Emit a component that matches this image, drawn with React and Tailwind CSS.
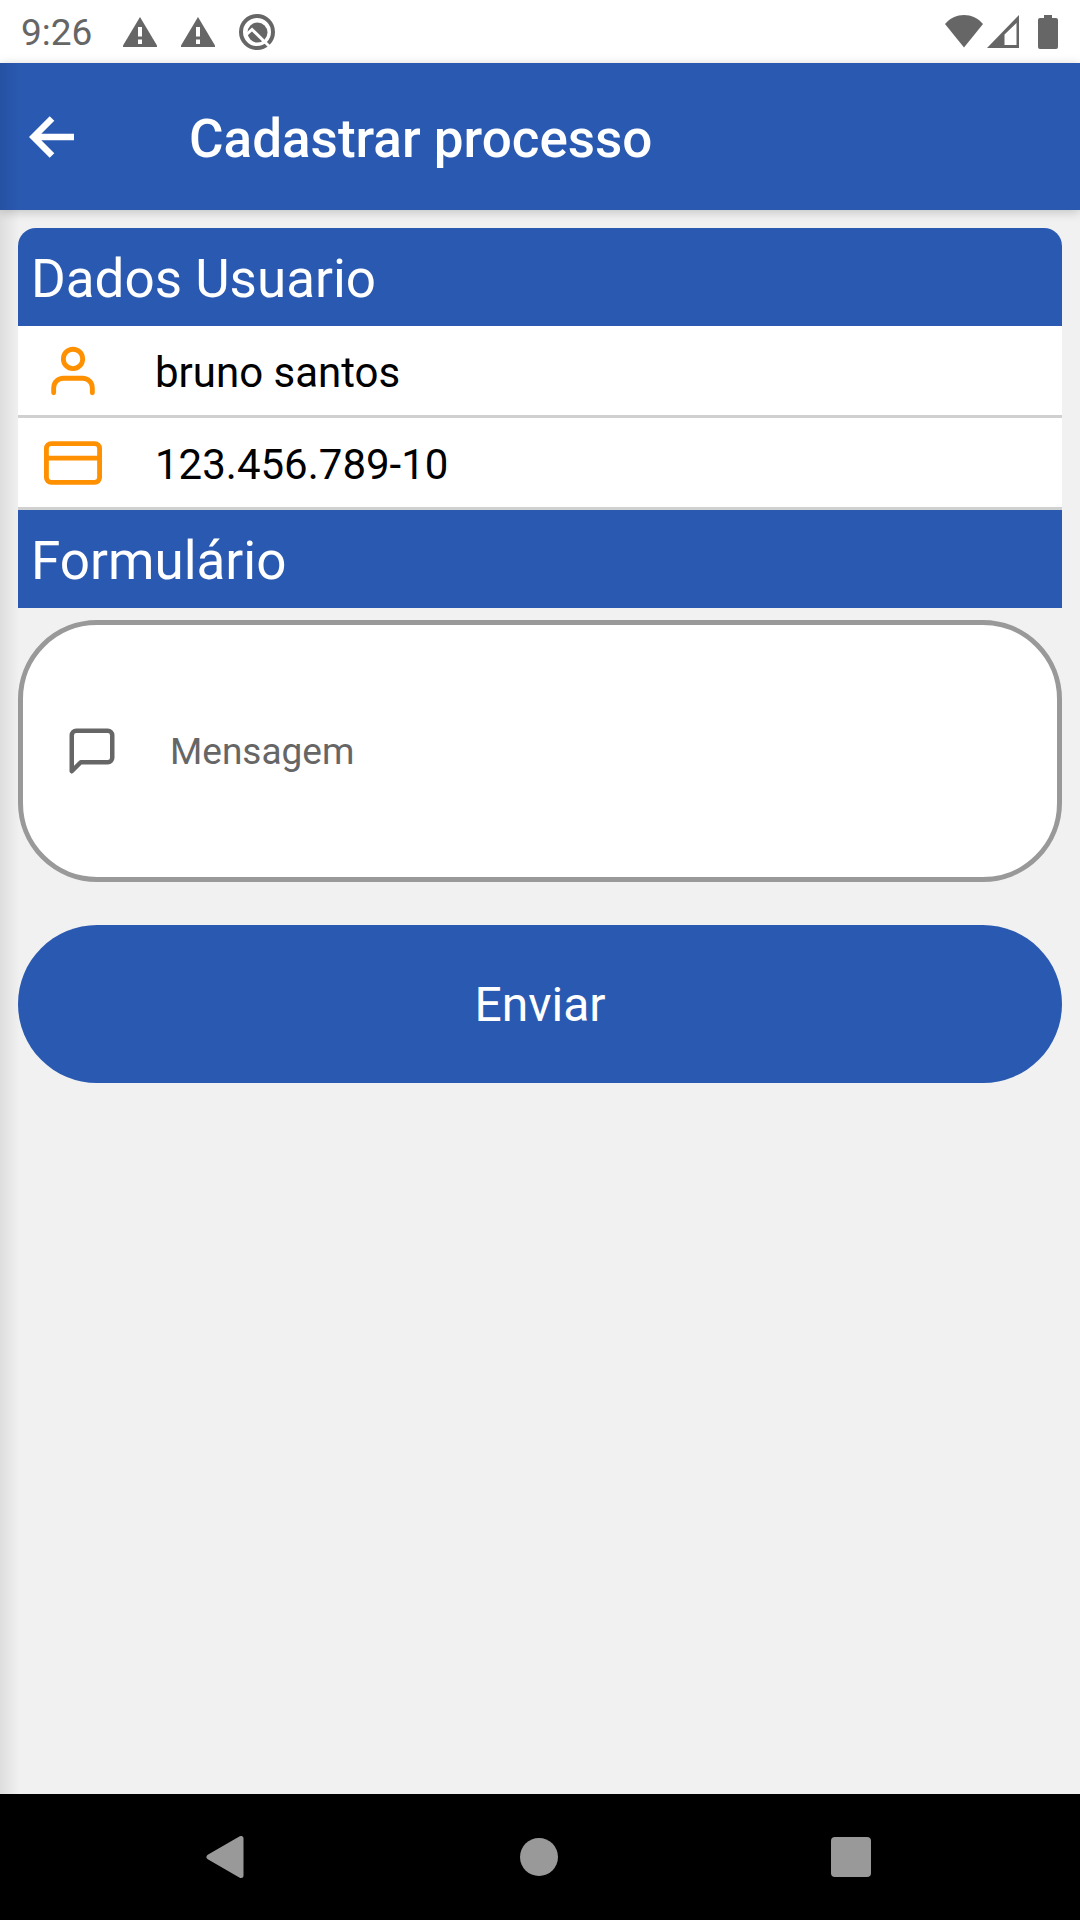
import { FiUser, FiCreditCard, FiMessageSquare } from "react-icons/fi";

function WarningIcon() {
  return (
    <svg className="h-[30px] w-[34px]" viewBox="0 0 34 30" aria-hidden="true">
      <path d="M17 0 34 28.500V30H0V28.500Z" fill="#666" />
      <path d="M15 10h4v9.500h-4zM15 22.500h4v4.500h-4z" fill="#fff" />
    </svg>
  );
}

function DebugIcon() {
  return (
    <svg className="size-9" viewBox="0 0 36 36" aria-hidden="true">
      <circle cx="18" cy="18" r="16" fill="none" stroke="#666" strokeWidth="4" />
      <circle cx="18.500" cy="18.500" r="10" fill="#666" />
      <path d="M7.500 20.500 13 15.500 31 33" fill="none" stroke="#fff" strokeWidth="3" />
    </svg>
  );
}

function StatusBar() {
  return (
    <header className="flex h-[63px] items-center justify-between bg-white pl-[21px] pr-[22px]">
      <div className="flex items-center">
        <span className="w-[102px] pt-0.5 text-[37px] leading-[44px] text-[#666]">9:26</span>
        <div className="flex items-center gap-6">
          <WarningIcon />
          <WarningIcon />
          <DebugIcon />
        </div>
      </div>
      <div className="flex items-center">
        <svg className="h-[33px] w-[38px]" viewBox="0 0 38 33" aria-label="Wi-Fi">
          <path d="M0 9C5 3 12 0 19 0s14 3 19 9L19 32.500Z" fill="#666" />
        </svg>
        <svg className="ml-1 h-[33px] w-8" viewBox="0 0 32 33" aria-label="Sinal">
          <path d="M32 0V33H0ZM29.500 8 17.500 19.500V30h12Z" fill="#666" fillRule="evenodd" />
        </svg>
        <svg className="ml-[19px] h-[34px] w-5" viewBox="0 0 20 34" aria-label="Bateria">
          <path d="M6 0h8v3h4a2 2 0 0 1 2 2v27a2 2 0 0 1-2 2H2a2 2 0 0 1-2-2V5a2 2 0 0 1 2-2h4z" fill="#666" />
        </svg>
      </div>
    </header>
  );
}

function AppBar() {
  return (
    <div className="relative flex h-[147px] items-center bg-[#2a59b1] pl-[29px] text-white shadow-[0_2px_10px_rgba(0,0,0,0.2)]">
      <button type="button" aria-label="Voltar" className="mr-[115px]">
        <svg className="block h-[42px] w-[45px]" viewBox="0 0 45 42" aria-hidden="true">
          <path d="M23 2.500 4.500 21 23 39.500M4.500 21H45" fill="none" stroke="#fff" strokeWidth="6.500" />
        </svg>
      </button>
      <h1 className="pt-1 text-[53px] font-medium leading-[64px]">Cadastrar processo</h1>
    </div>
  );
}

function SectionTitle({ children, className = "" }) {
  return (
    <h2 className={`bg-[#2a59b1] px-[13px] pb-[15px] pt-[19px] text-[53px] leading-[64px] text-white ${className}`}>
      {children}
    </h2>
  );
}

function InfoRow({ icon: Icon, children }) {
  return (
    <li className="flex h-[92px] items-center border-b-[3px] border-[#d0d0d0] bg-white text-[42px] leading-[50px] text-black">
      <span className="flex w-[110px] justify-center">
        <Icon size={58} color="#ff9000" aria-hidden="true" />
      </span>
      <span className="pl-[27px] pt-1">{children}</span>
    </li>
  );
}

function NavBar() {
  return (
    <nav className="flex h-[126px] items-center justify-around bg-black pl-[69px] pr-[73px]">
      <button type="button" aria-label="Voltar">
        <svg className="size-[42px]" viewBox="0 0 42 42" aria-hidden="true">
          <path d="M4 21 36 2.500V39.500Z" fill="#999" stroke="#999" strokeWidth="5" strokeLinejoin="round" />
        </svg>
      </button>
      <button type="button" aria-label="Início" className="size-[38px] rounded-full bg-[#999]" />
      <button type="button" aria-label="Recentes" className="size-10 rounded-[4px] bg-[#999]" />
    </nav>
  );
}

export default function App() {
  return (
    <div className="flex min-h-screen flex-col bg-[#f1f1f1] font-[Roboto,sans-serif]">
      <StatusBar />
      <div className="relative flex flex-1 flex-col">
        <AppBar />
        <main className="p-[18px]">
          <SectionTitle className="rounded-t-[18px]">Dados Usuario</SectionTitle>
          <ul>
            <InfoRow icon={FiUser}>bruno santos</InfoRow>
            <InfoRow icon={FiCreditCard}>123.456.789-10</InfoRow>
          </ul>
          <SectionTitle>Formulário</SectionTitle>
          <form onSubmit={(e) => e.preventDefault()}>
            <label className="mt-3 flex h-[262px] items-center rounded-[79px] border-[5px] border-[#999] bg-white pl-[42px] pr-10">
              <FiMessageSquare size={54} color="#666" aria-hidden="true" className="shrink-0" />
              <input
                type="text"
                aria-label="Mensagem"
                placeholder="Mensagem"
                className="ml-[51px] min-w-0 flex-1 pt-0.5 text-[37px] leading-[44px] text-black outline-none placeholder:text-[#666] placeholder:opacity-100"
              />
            </label>
            <button
              type="submit"
              className="mt-[43px] h-[158px] w-full rounded-[79px] bg-[#2a59b1] pt-0.5 text-[48px] leading-[56px] text-white"
            >
              Enviar
            </button>
          </form>
        </main>
        <div className="pointer-events-none absolute inset-y-0 left-0 w-5 bg-linear-to-r from-black/8 to-transparent" />
      </div>
      <NavBar />
    </div>
  );
}
